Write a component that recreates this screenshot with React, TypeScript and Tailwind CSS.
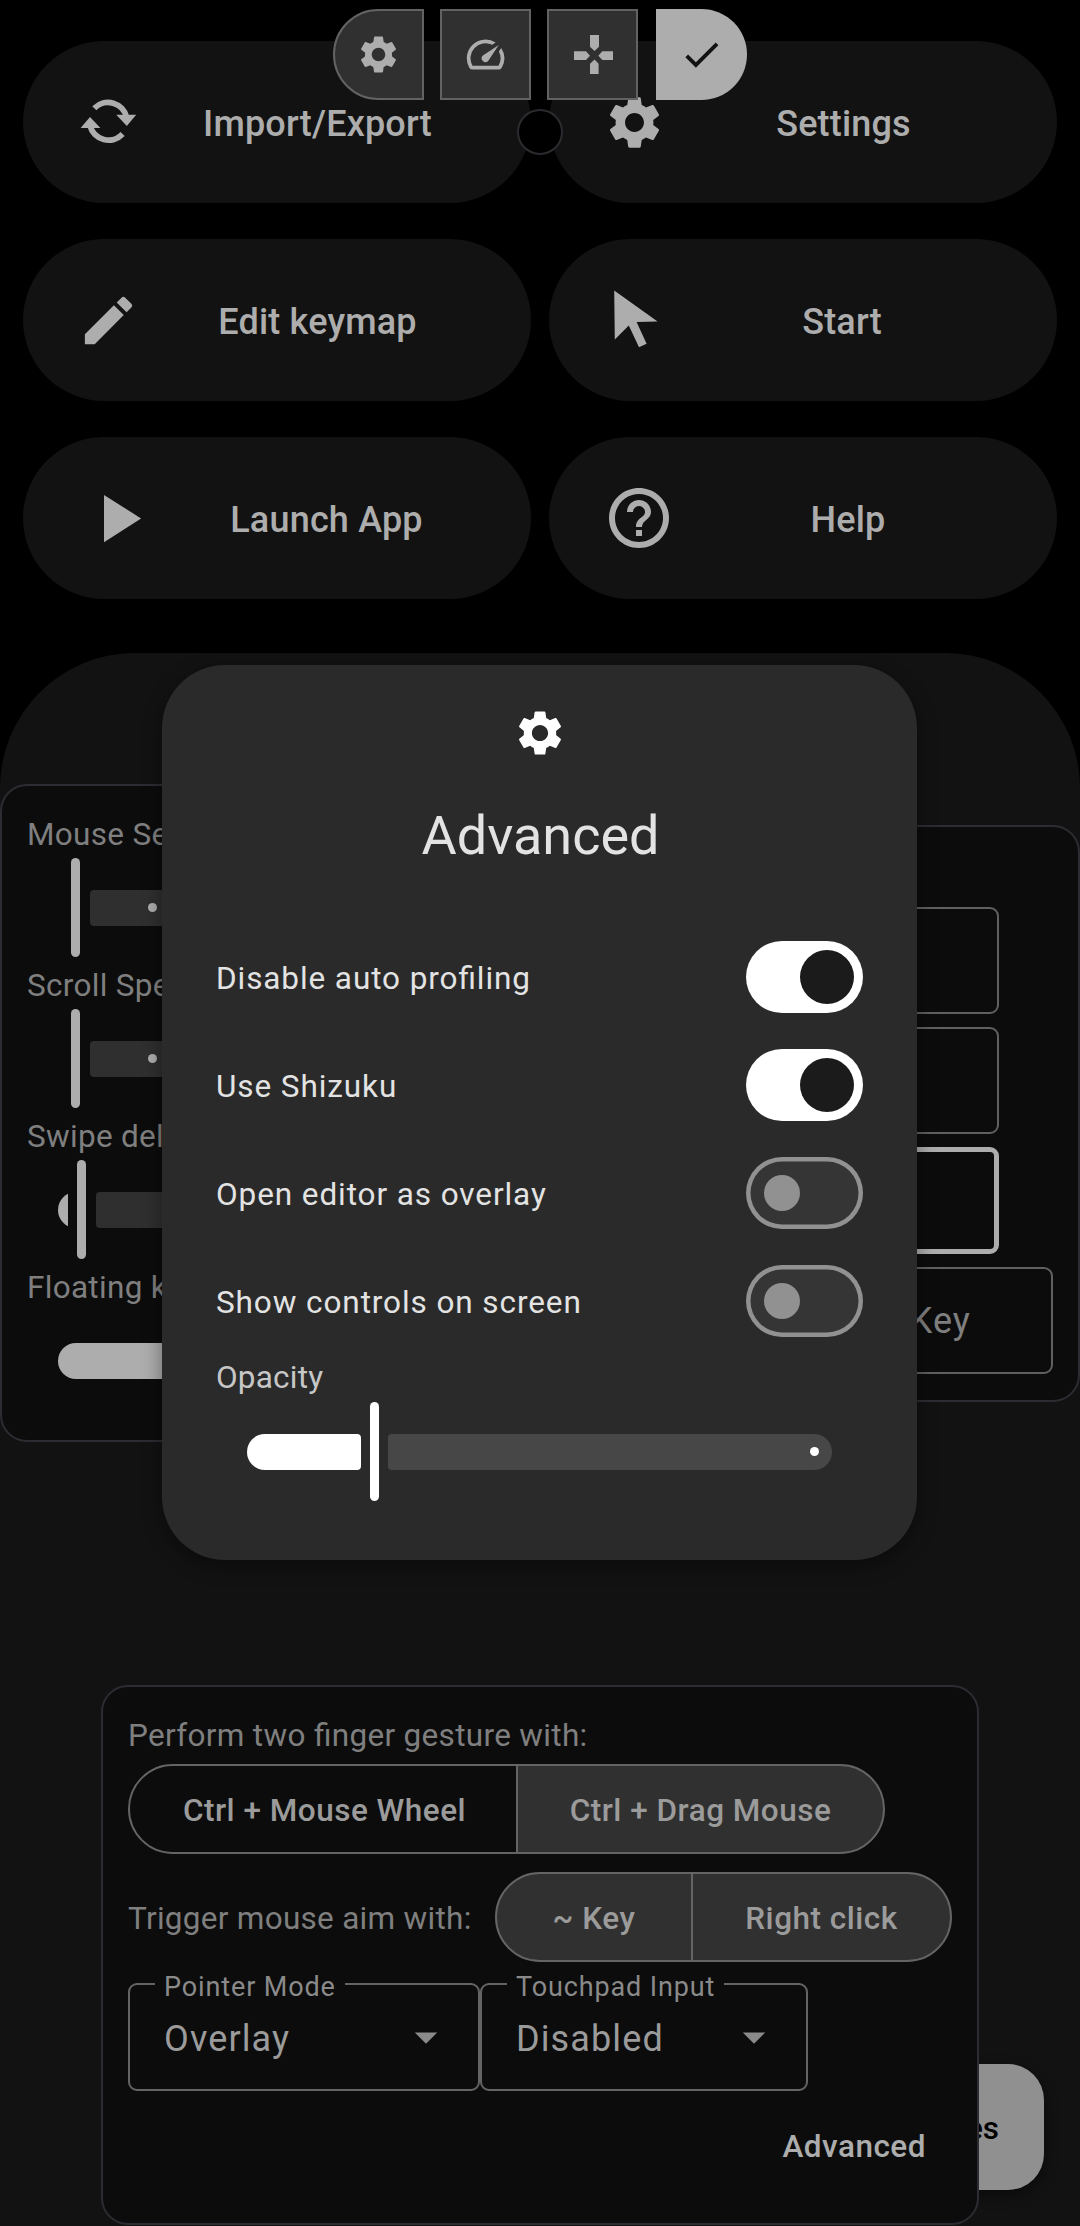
import type { ReactNode } from "react";
import {
  MdArrowDropDown,
  MdCheck,
  MdEdit,
  MdHelpOutline,
  MdPlayArrow,
  MdSettings,
  MdSpeed,
} from "react-icons/md";

/* ---------- icons ---------- */

function SyncIcon() {
  return (
    <svg viewBox="7 0.5 63 63" className="h-[63px] w-[63px] shrink-0" fill="currentColor">
      <path d="M24.3 17.7A19.2 19.2 0 0 1 56.7 27" fill="none" stroke="currentColor" strokeWidth="5.8" />
      <path d="M46.3 24.3 66.2 24.3 56.8 35.4z" />
      <path d="M52.6 43.6A19.2 19.2 0 0 1 20 35" fill="none" stroke="currentColor" strokeWidth="5.8" />
      <path d="M10.6 37.4 20 26.5 30.4 37.4z" />
    </svg>
  );
}

function PointerIcon() {
  return (
    <svg viewBox="0 0 60 63" className="h-[63px] w-[60px] shrink-0" fill="currentColor">
      <path d="M11.2 1.4 54.6 32.6 33.6 33 43.6 54.8 36 58.2 25.8 36.6 11.8 50.4z" />
    </svg>
  );
}

function DpadIcon() {
  return (
    <svg viewBox="0 0 39 39" className="h-[39px] w-[39px]" fill="currentColor">
      <path d="M16 0h9v11.8L20.5 16 16 11.8z" />
      <path d="M0 16.3h12l4 4.4-4 4.3H0z" />
      <path d="M39 16.3H28.3l-4 4.4 4 4.3H39z" />
      <path d="M16 39V28.7l4.5-4.2 4.1 4.2V39z" />
    </svg>
  );
}

/* ---------- home screen ---------- */

function Pill({ icon, label }: { icon: ReactNode; label: string }) {
  return (
    <button className="flex h-[162px] items-center rounded-full bg-[#121212] pr-9 pl-[54px] text-[#adadad]">
      {icon}
      <span className="flex-1 pt-[3px] text-center text-[36px] leading-[54px] font-medium tracking-[0.18px]">
        {label}
      </span>
    </button>
  );
}

/* ---------- floating toolbar ---------- */

function ToolButton({ children, className = "" }: { children: ReactNode; className?: string }) {
  return (
    <button
      className={`flex h-[91px] w-[91px] items-center justify-center border-2 border-[#626262] bg-[#303030] text-[#adadad] ${className}`}
    >
      {children}
    </button>
  );
}

/* ---------- settings cards ---------- */

function MutedSlider({ label, children }: { label: string; children: ReactNode }) {
  return (
    <div>
      <p className="h-[45px] pl-[25px] text-[31.5px] leading-[45px] tracking-[0.3px] text-[#7f7f7f]">{label}</p>
      <div className="mt-px mb-[6px] flex h-[99px] items-center pl-14">{children}</div>
    </div>
  );
}

const mutedThumb = <span className="h-[99px] w-[9px] rounded-full bg-[#adadad]" />;

function StartSlider({ label }: { label: string }) {
  return (
    <MutedSlider label={label}>
      <span className="w-[13px]" />
      {mutedThumb}
      <span className="ml-[10px] flex h-9 w-[300px] items-center rounded-l-[4px] bg-[#2f2f2f] pl-[58px]">
        <span className="h-[9px] w-[9px] rounded-full bg-[#adadad]" />
      </span>
    </MutedSlider>
  );
}

function LeftCard() {
  return (
    <section className="mt-[131px] h-[658px] w-[460px] rounded-[27px] border-2 border-[#2c2c32] bg-[#0c0c0c] pt-[26px]">
      <StartSlider label="Mouse Sensitivity" />
      <StartSlider label="Scroll Speed" />
      <MutedSlider label="Swipe delay">
        <span className="flex h-9 w-[10px] overflow-hidden">
          <span className="h-9 w-9 shrink-0 rounded-full bg-[#adadad]" />
        </span>
        <span className="w-[9px]" />
        {mutedThumb}
        <span className="ml-[10px] h-9 w-[300px] rounded-l-[4px] bg-[#2f2f2f]" />
      </MutedSlider>
      <MutedSlider label="Floating keys">
        <span className="h-9 w-[300px] rounded-l-full bg-[#adadad]" />
      </MutedSlider>
    </section>
  );
}

function RightCard() {
  return (
    <section className="mt-[172px] flex h-[577px] w-[460px] flex-col rounded-[27px] border-2 border-[#2c2c32] bg-[#0c0c0c] pt-[80px] pl-[25px]">
      <div className="h-[107px] w-[352px] rounded-[9px] border-2 border-[#606060]" />
      <div className="mt-[13px] h-[107px] w-[352px] rounded-[9px] border-2 border-[#606060]" />
      <div className="mt-[13px] h-[107px] w-[352px] rounded-[9px] border-[5px] border-[#adadad]" />
      <div className="mt-[13px] flex h-[107px] w-[406px] items-center justify-end rounded-[9px] border-2 border-[#606060] pr-[80px] text-[36px] leading-[54px] tracking-[1.1px] text-[#7f7f7f]">
        Key
      </div>
    </section>
  );
}

function Segmented({ first, second, className = "", firstClass }: { first: string; second: string; className?: string; firstClass: string }) {
  return (
    <div
      className={`flex h-[90px] overflow-hidden rounded-full border-2 border-[#646464] bg-[#303030] text-[31.5px] font-medium tracking-[0.5px] text-[#9b9b9b] ${className}`}
    >
      <button className={`flex items-center justify-center border-r-2 border-[#646464] pt-[3px] ${firstClass}`}>{first}</button>
      <button className="flex flex-1 items-center justify-center pt-[3px]">{second}</button>
    </div>
  );
}

function SelectField({ label, value, className }: { label: string; value: string; className: string }) {
  return (
    <div className={`relative flex h-[108px] items-center justify-between rounded-[9px] border-2 border-[#646464] pr-[25px] pl-[34px] ${className}`}>
      <span className="absolute -top-[14px] left-[25px] bg-[#0c0c0c] px-[9px] text-[27px] leading-8 tracking-[0.88px] text-[#8a8a8a]">
        {label}
      </span>
      <span className="pt-[3px] text-[36px] leading-[54px] tracking-[1.12px] text-[#9b9b9b]">{value}</span>
      <MdArrowDropDown size={54} className="text-[#8a8a8a]" />
    </div>
  );
}

function GestureCard() {
  return (
    <section className="relative ml-[101px] flex h-[540px] w-[878px] flex-col rounded-[27px] border-2 border-[#2c2c32] bg-[#0c0c0c] px-[25px] pt-[26px]">
      <p className="h-[45px] text-[31.5px] leading-[45px] tracking-[0.32px] text-[#7f7f7f]">Perform two finger gesture with:</p>
      <Segmented
        first="Ctrl + Mouse Wheel"
        second="Ctrl + Drag Mouse"
        className="mt-[6px] w-[757px]"
        firstClass="w-[388px] bg-[#0c0c0c] pl-[3px]"
      />
      <div className="mt-[18px] flex items-center justify-between">
        <span className="pt-[3px] text-[31.5px] leading-[45px] tracking-[0.28px] text-[#7f7f7f]">Trigger mouse aim with:</span>
        <Segmented first="~ Key" second="Right click" className="w-[457px]" firstClass="w-[196px]" />
      </div>
      <div className="mt-[21px] flex">
        <SelectField label="Pointer Mode" value="Overlay" className="w-[352px]" />
        <SelectField label="Touchpad Input" value="Disabled" className="w-[328px]" />
      </div>
      <button className="mt-[33px] mr-[26px] self-end text-[31.5px] leading-[45px] font-medium tracking-[0.5px] text-[#adadad]">
        Advanced
      </button>
    </section>
  );
}

/* ---------- dialog ---------- */

function SwitchRow({ label, on }: { label: string; on: boolean }) {
  return (
    <div className="flex h-[108px] items-center justify-between">
      <span className="pt-[2px] text-[31.5px] leading-[45px] tracking-[0.91px] text-[#e3e3e3]">{label}</span>
      {on ? (
        <span className="flex h-[72px] w-[117px] items-center justify-end rounded-full bg-white pr-[9px]">
          <span className="h-[54px] w-[54px] rounded-full bg-[#1b1b1b]" />
        </span>
      ) : (
        <span className="flex h-[72px] w-[117px] items-center rounded-full bg-[#353535] pl-[18px] shadow-[inset_0_0_0_4.5px_#919191]">
          <span className="h-9 w-9 rounded-full bg-[#919191]" />
        </span>
      )}
    </div>
  );
}

function AdvancedDialog() {
  return (
    <div className="absolute top-[665px] left-[162px] flex h-[895px] w-[755px] flex-col rounded-[63px] bg-[#2a2a2a] px-[54px] pt-[41px] shadow-[0_6px_20px_rgba(0,0,0,0.4)]">
      <MdSettings size={54} className="shrink-0 self-center text-white" />
      <h2 className="mt-10 pl-[2px] text-center text-[54px] leading-[72px] text-[#e3e3e3]">Advanced</h2>
      <div className="mt-[51px]">
        <SwitchRow label="Disable auto profiling" on />
        <SwitchRow label="Use Shizuku" on />
        <SwitchRow label="Open editor as overlay" on={false} />
        <SwitchRow label="Show controls on screen" on={false} />
      </div>
      <p className="h-[45px] text-[31.5px] leading-[45px] tracking-[0.2px] text-[#c6c6c6]">Opacity</p>
      <div className="mt-[2px] flex h-[99px] items-center pr-[31px] pl-[31px]">
        <span className="h-9 w-[114px] rounded-l-[18px] rounded-r-[4px] bg-white" />
        <span className="mx-[9px] h-[99px] w-[9px] rounded-full bg-white" />
        <span className="flex h-9 flex-1 items-center justify-end rounded-l-[4px] rounded-r-[18px] bg-[#474747] pr-[13px]">
          <span className="h-[9px] w-[9px] rounded-full bg-white" />
        </span>
      </div>
    </div>
  );
}

export default function App() {
  return (
    <div className="relative h-[2226px] w-[1080px] overflow-hidden bg-black font-[Roboto,sans-serif] [font-feature-settings:'liga'_1]">
      <main className="pt-[41px]">
        <div className="grid grid-cols-[508px_508px] gap-x-[18px] gap-y-9 pl-[23px]">
          <Pill icon={<SyncIcon />} label="Import/Export" />
          <Pill icon={<MdSettings size={63} className="shrink-0" />} label="Settings" />
          <Pill icon={<MdEdit size={63} className="shrink-0" />} label="Edit keymap" />
          <Pill icon={<PointerIcon />} label="Start" />
          <Pill icon={<MdPlayArrow size={81} className="shrink-0" />} label="Launch App" />
          <Pill icon={<MdHelpOutline size={72} className="shrink-0" />} label="Help" />
        </div>

        <div className="relative mt-[54px] h-[1573px] rounded-t-[135px] bg-[#121212]">
          <div className="flex h-[1032px] items-start justify-between">
            <LeftCard />
            <RightCard />
          </div>
          <button className="absolute top-[1411px] right-9 flex h-[126px] w-[180px] items-center justify-end rounded-[36px] bg-[#909090] pt-[3px] pr-[45px] text-[31.5px] font-medium text-black shadow-[0_5px_14px_rgba(0,0,0,0.45)]">
            Files
          </button>
          <GestureCard />
        </div>
      </main>

      <div className="absolute top-[9px] left-[333px] flex gap-4">
        <ToolButton className="rounded-l-full">
          <MdSettings size={45} />
        </ToolButton>
        <ToolButton>
          <MdSpeed size={45} />
        </ToolButton>
        <ToolButton className="pl-[2px]">
          <DpadIcon />
        </ToolButton>
        <button className="ml-[2px] flex h-[91px] w-[91px] items-center justify-center rounded-r-full bg-[#adadad] text-[#131313]">
          <MdCheck size={45} />
        </button>
      </div>
      <div className="absolute top-[109px] left-[517px] h-[46px] w-[46px] rounded-full border-2 border-[#2b2b30] bg-black" />

      <AdvancedDialog />
    </div>
  );
}
